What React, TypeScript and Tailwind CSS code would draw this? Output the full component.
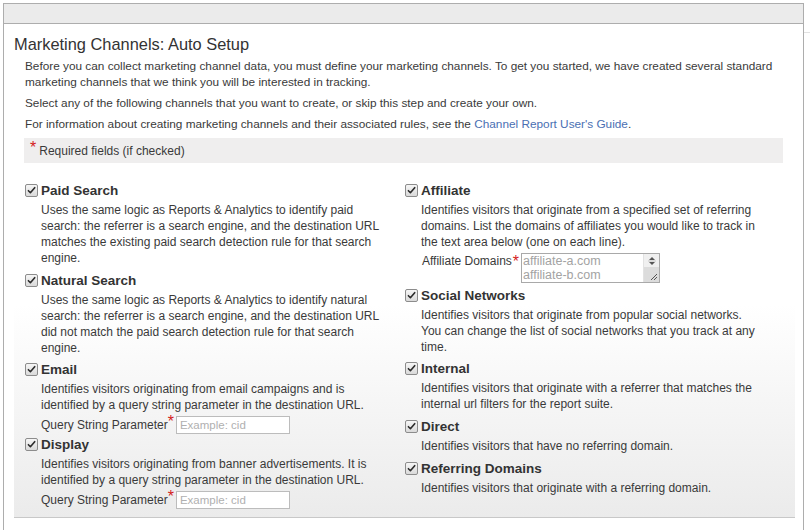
import React from "react";

const font = { fontFamily: '"Liberation Sans", Arial, sans-serif' };

const Check = () => (
  <span className="mt-[3px] w-[13px] h-[13px] shrink-0 border border-[#8c8c8c] rounded-[2px] bg-linear-to-b from-[#f6f6f6] to-[#dadada] flex items-center justify-center">
    <svg width="9" height="9" viewBox="0 0 9 9">
      <path d="M1.4 4.7 L3.4 6.7 L7.7 1.7" stroke="#2b2b2b" strokeWidth="1.6" fill="none" strokeLinecap="round" strokeLinejoin="round" />
    </svg>
  </span>
);

const Star = () => <span className="text-[#d4211c] text-[16px] leading-[10px] relative top-[-3px]">*</span>;

const Lines = ({ lines }: { lines: string[] }) => (
  <div className="mt-[1px] text-[12px] leading-[16px] text-[#3a3a3a] whitespace-nowrap">
    {lines.map((l, i) => (
      <div key={i}>{l}</div>
    ))}
  </div>
);

const Item = ({
  title,
  lines,
  children,
  className = "",
}: {
  title: string;
  lines: string[];
  children?: React.ReactNode;
  className?: string;
}) => (
  <div className={"flex " + className}>
    <div className="w-[16px] shrink-0">
      <Check />
    </div>
    <div>
      <div className="text-[13.5px] font-bold leading-[20px] text-[#333]">{title}</div>
      <Lines lines={lines} />
      {children}
    </div>
  </div>
);

const QueryRow = () => (
  <div className="flex items-center mt-[3px] h-[18px] text-[12px] text-[#3a3a3a]">
    <span>Query String Parameter</span>
    <Star />
    <div className="ml-[2px] w-[114px] h-[18px] border border-[#bcbcbc] bg-white text-[11.5px] text-[#b0b0b0] leading-[16px] pl-[3px]">
      Example: cid
    </div>
  </div>
);

export default function App() {
  return (
    <div className="w-[810px] h-[530px] bg-white overflow-hidden relative" style={font}>
      <div className="absolute right-0 top-[32px] w-[6px] h-px bg-[#e2e2e2]" />
      <div className="ml-[3px] mt-[3px] w-[801px] h-[560px] border-l border-t border-r border-[#adadad]">
        <div className="h-[20px] bg-[#ebebeb] border-b border-[#adadad]" />
        <div className="pl-[10px] pr-[8px]">
          <div className="mt-[10px] text-[16.4px] leading-[20px] text-[#333]">Marketing Channels: Auto Setup</div>
          <div className="pl-[11px] text-[11.8px] leading-[16px] text-[#3a3a3a] whitespace-nowrap">
            <div className="mt-[4px]">
              <div>
                Before you can collect marketing channel data, you must define your marketing channels. To get you started, we have created several standard
              </div>
              <div>marketing channels that we think you will be interested in tracking.</div>
            </div>
            <div className="mt-[5px]">
              Select any of the following channels that you want to create, or skip this step and create your own.
            </div>
            <div className="mt-[5px]">
              For information about creating marketing channels and their associated rules, see the{" "}
              <span className="text-[#4a6fb3]">Channel Report User's Guide</span>.
            </div>
          </div>
          <div className="ml-[10px] mr-[12px] mt-[6px] h-[25px] bg-[#efeeee] flex items-center pl-[6px] text-[12px] text-[#3a3a3a]">
            <Star />
            <span className="ml-[3px]">Required fields (if checked)</span>
          </div>
          <div className="h-[355px] bg-linear-to-b from-white from-40% to-[#ebebeb] border-b border-[#c8c8c8] pl-[11px] pt-[18px] grid grid-cols-[380px_380px]">
            <div>
              <Item
                title="Paid Search"
                lines={[
                  "Uses the same logic as Reports & Analytics to identify paid",
                  "search: the referrer is a search engine, and the destination URL",
                  "matches the existing paid search detection rule for that search",
                  "engine.",
                ]}
              />
              <Item
                className="mt-[5px]"
                title="Natural Search"
                lines={[
                  "Uses the same logic as Reports & Analytics to identify natural",
                  "search: the referrer is a search engine, and the destination URL",
                  "did not match the paid search detection rule for that search",
                  "engine.",
                ]}
              />
              <Item
                className="mt-[4px]"
                title="Email"
                lines={[
                  "Identifies visitors originating from email campaigns and is",
                  "identified by a query string parameter in the destination URL.",
                ]}
              >
                <QueryRow />
              </Item>
              <Item
                className="mt-[1px]"
                title="Display"
                lines={[
                  "Identifies visitors originating from banner advertisements. It is",
                  "identified by a query string parameter in the destination URL.",
                ]}
              >
                <QueryRow />
              </Item>
            </div>
            <div>
              <Item
                title="Affiliate"
                lines={[
                  "Identifies visitors that originate from a specified set of referring",
                  "domains. List the domains of affiliates you would like to track in",
                  "the text area below (one on each line).",
                ]}
              >
                <div className="flex mt-[3px] text-[12px] text-[#3a3a3a]">
                  <span className="leading-[16px] ml-[1px]">Affiliate Domains</span>
                  <span className="mt-[4px] ml-[1px]">
                    <Star />
                  </span>
                  <div className="ml-[2px] w-[139px] h-[30px] border border-[#a9a9a9] bg-white flex">
                    <div className="flex-1 pl-[1px] text-[12.5px] leading-[14px] text-[#a3a3a3]">
                      <div>affiliate-a.com</div>
                      <div>affiliate-b.com</div>
                    </div>
                    <div className="w-[16px] bg-[#f0f0f0] border-l border-[#e2e2e2] flex flex-col items-center">
                      <svg width="12" height="12" viewBox="0 0 12 12" className="mt-[1px]">
                        <path d="M3 5 L6 2 L9 5 Z" fill="#555" />
                        <path d="M3 7 L6 10 L9 7 Z" fill="#555" />
                        <path d="M2 6 H10" stroke="#bbb" strokeWidth="0.8" />
                      </svg>
                      <div className="flex-1 w-full bg-[#dcdcdc] relative">
                        <svg width="10" height="10" viewBox="0 0 10 10" className="absolute right-[1px] bottom-[1px]">
                          <path d="M9 3 L3 9 M9 6 L6 9" stroke="#555" strokeWidth="1" />
                        </svg>
                      </div>
                    </div>
                  </div>
                </div>
              </Item>
              <Item
                className="mt-[3px]"
                title="Social Networks"
                lines={[
                  "Identifies visitors that originate from popular social networks.",
                  "You can change the list of social networks that you track at any",
                  "time.",
                ]}
              />
              <Item
                className="mt-[4px]"
                title="Internal"
                lines={[
                  "Identifies visitors that originate with a referrer that matches the",
                  "internal url filters for the report suite.",
                ]}
              />
              <Item
                className="mt-[5px]"
                title="Direct"
                lines={["Identifies visitors that have no referring domain."]}
              />
              <Item
                className="mt-[5px]"
                title="Referring Domains"
                lines={["Identifies visitors that originate with a referring domain."]}
              />
            </div>
          </div>
        </div>
      </div>
    </div>
  );
}
